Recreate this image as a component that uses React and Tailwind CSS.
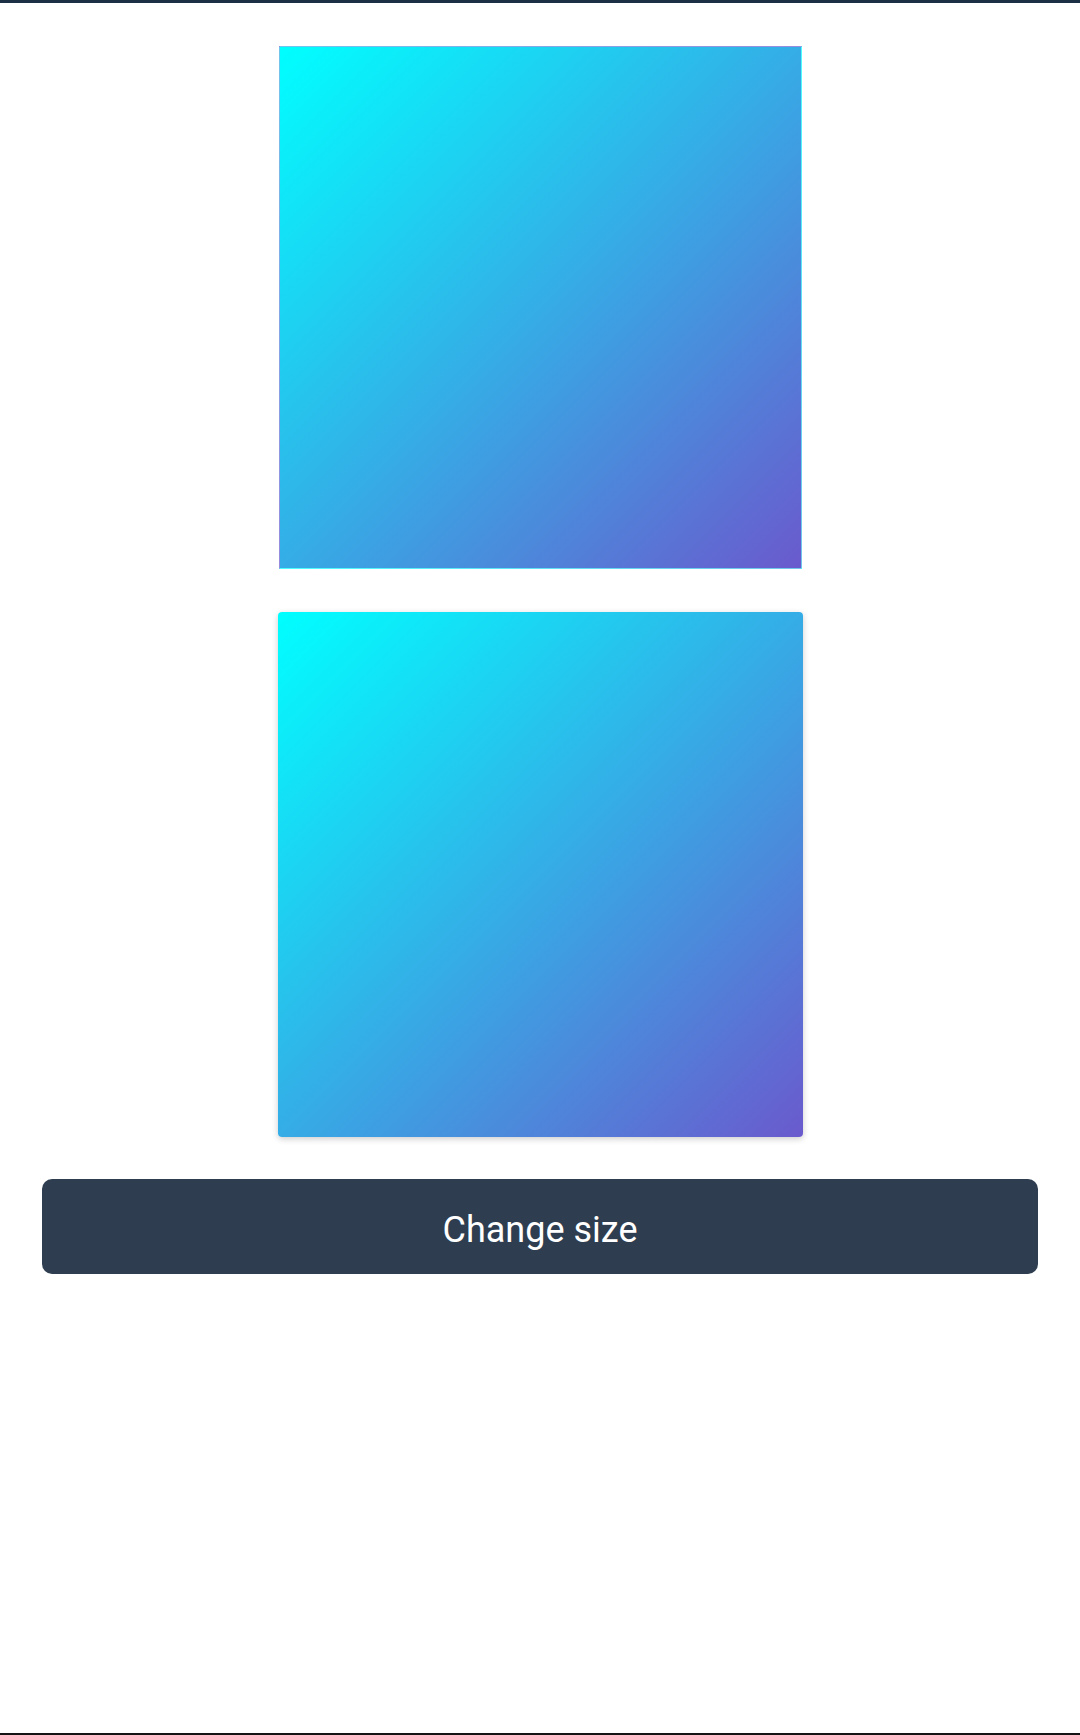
export default function App() {
  return (
    <div className="flex h-[1735px] flex-col border-b-2 border-[#151515] bg-white font-['Roboto',sans-serif]">
      <div className="h-[3px] bg-[#1b2f45]" />

      <div className="flex flex-col items-center pt-[43px]">
        {/* plain square */}
        <div className="h-[523px] w-[523px] border border-white/30 bg-[linear-gradient(to_bottom_right,#00ffff,#6a5acd)]" />

        {/* rounded square with shadow */}
        <div className="mt-[43px] h-[525px] w-[525px] rounded-[4px] bg-[linear-gradient(to_bottom_right,#00ffff,#6a5acd)] shadow-[0_2px_6px_rgba(0,0,0,0.2)]" />
      </div>

      <div className="px-[42px] pt-[42px]">
        <button className="flex h-[95px] w-full items-center justify-center rounded-[10px] bg-[#2e3e50] pt-[6px] text-[36px] text-white">
          Change size
        </button>
      </div>
    </div>
  );
}
